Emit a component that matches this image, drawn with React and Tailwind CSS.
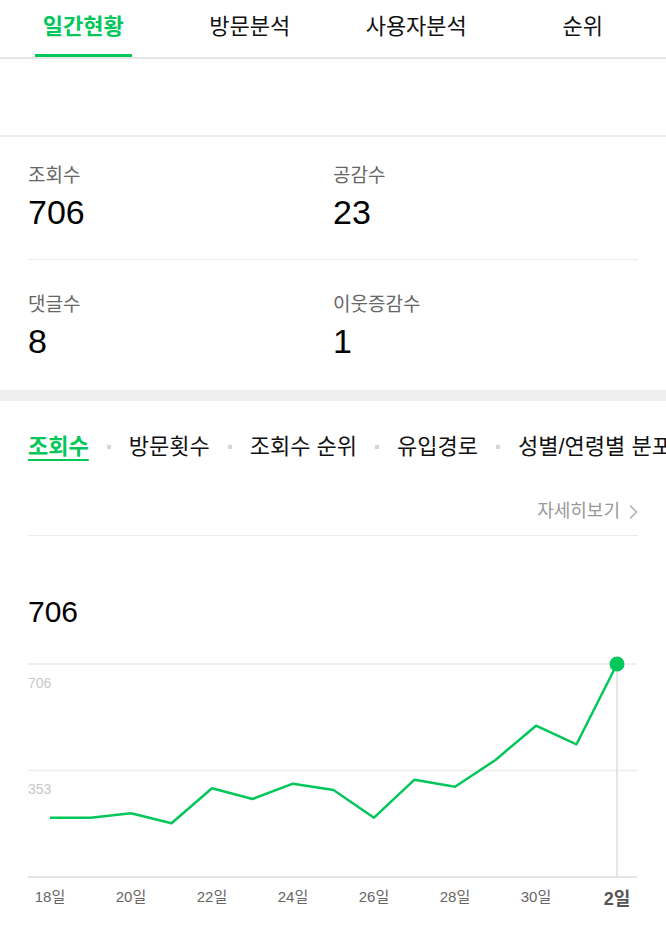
import React from 'react'

const GREEN = '#03c75a'

const topTabs = ['일간현황', '방문분석', '사용자분석', '순위']
const subTabs = ['조회수', '방문횟수', '조회수 순위', '유입경로', '성별/연령별 분포']

const stats = [
  [
    { label: '조회수', value: '706' },
    { label: '공감수', value: '23' },
  ],
  [
    { label: '댓글수', value: '8' },
    { label: '이웃증감수', value: '1' },
  ],
]

// pixel coords inside the chart svg (x 28..637 on the page, top at 650)
const points = [
  [22, 167.7], [62.5, 167.7], [103, 163.3], [143.5, 173.3], [184, 138.3],
  [224.5, 149], [265, 133.7], [305.5, 140], [346, 167.7], [386.5, 129.7],
  [427, 136.7], [467.5, 110], [508, 75.7], [548.5, 94.3], [589, 14],
]

const xLabels = ['18일', '20일', '22일', '24일', '26일', '28일', '30일']

const ViewChart = () => (
  <svg width="609" height="270" viewBox="0 0 609 270" className="block">
    <line x1="0" y1="14" x2="609" y2="14" stroke="#ececec" strokeWidth="1.5" />
    <line x1="0" y1="120.5" x2="609" y2="120.5" stroke="#ececec" strokeWidth="1.5" />
    <line x1="0" y1="227" x2="609" y2="227" stroke="#dcdcdc" strokeWidth="1.5" />
    <line x1="589" y1="14" x2="589" y2="227" stroke="#dcdcdc" strokeWidth="1.5" />
    <text x="0" y="37.5" fontSize="14" fill="#c8c8c8" fontFamily="Liberation Sans, sans-serif">706</text>
    <text x="0" y="144" fontSize="14" fill="#c8c8c8" fontFamily="Liberation Sans, sans-serif">353</text>
    <polyline
      points={points.map(p => p.join(',')).join(' ')}
      fill="none"
      stroke={GREEN}
      strokeWidth="2.5"
      strokeLinejoin="round"
    />
    <circle cx="589" cy="14" r="7.5" fill={GREEN} />
    {xLabels.map((l, i) => (
      <text
        key={l}
        x={points[i * 2][0]}
        y="252"
        textAnchor="middle"
        fontSize="15"
        fill="#666"
        fontFamily="Liberation Sans, Noto Sans CJK KR, sans-serif"
      >
        {l}
      </text>
    ))}
    <text
      x="589"
      y="255"
      textAnchor="middle"
      fontSize="18"
      fontWeight="700"
      fill="#555"
      fontFamily="Liberation Sans, Noto Sans CJK KR, sans-serif"
    >
      2일
    </text>
  </svg>
)

const App = () => {
  return (
    <div className="w-[666px] min-h-[941px] bg-white font-['Liberation_Sans','Noto_Sans_CJK_KR',sans-serif] overflow-hidden">
      {/* top tabs */}
      <div className="grid grid-cols-4 h-[59px] border-b-2 border-[#e6e6e6]">
        {topTabs.map((t, i) => (
          <div key={t} className="flex justify-center pt-[13px]">
            <span
              className={
                i === 0
                  ? 'relative h-[44px] text-[22px] leading-[28px] font-bold text-[#03c75a]'
                  : 'text-[22px] leading-[28px] text-[#111]'
              }
            >
              {t}
              {i === 0 && <span className="absolute -left-2 -right-2 bottom-0 h-[3px] bg-[#03c75a]" />}
            </span>
          </div>
        ))}
      </div>

      <div className="h-[78px] border-b-2 border-[#ebebeb]" />

      {/* summary numbers */}
      <div className="px-[28px]">
        {stats.map((row, r) => (
          <div
            key={r}
            className={
              r === 0
                ? 'grid grid-cols-2 pt-[27px] pb-[27px] border-b border-[#ebebeb]'
                : 'grid grid-cols-2 pt-[33px] pb-[29px]'
            }
          >
            {row.map(s => (
              <div key={s.label}>
                <div className="text-[19px] leading-[24px] text-[#666]">{s.label}</div>
                <div className="mt-[4px] text-[34px] leading-[40px] text-black">{s.value}</div>
              </div>
            ))}
          </div>
        ))}
      </div>

      <div className="h-[11px] bg-[#efefef]" />

      {/* view stats */}
      <div className="pt-[32px] pl-[28px] flex items-center whitespace-nowrap overflow-hidden">
        {subTabs.map((t, i) => (
          <React.Fragment key={t}>
            {i > 0 && <span className="mx-[18px] w-[4px] h-[4px] bg-[#d6d6d6] shrink-0" />}
            <span
              className={
                i === 0
                  ? 'text-[22px] leading-[28px] font-bold text-[#03c75a] underline decoration-2 underline-offset-[5px]'
                  : 'text-[22px] leading-[28px] text-[#111]'
              }
            >
              {t}
            </span>
          </React.Fragment>
        ))}
      </div>

      <div className="px-[28px]">
        <div className="mt-[38px] flex justify-end items-center gap-[8px] text-[18px] leading-[24px] text-[#999]">
          자세히보기
          <svg width="10" height="16" viewBox="0 0 10 16" className="mt-[1px]">
            <path d="M2 1.5 L8.5 8 L2 14.5" fill="none" stroke="#aaa" strokeWidth="1.4" />
          </svg>
        </div>
        <div className="mt-[12px] border-b border-[#ebebeb]" />

        <div className="mt-[58px] text-[30px] leading-[36px] text-black">706</div>
        <div className="mt-[20px]">
          <ViewChart />
        </div>
      </div>
    </div>
  )
}

export default App
